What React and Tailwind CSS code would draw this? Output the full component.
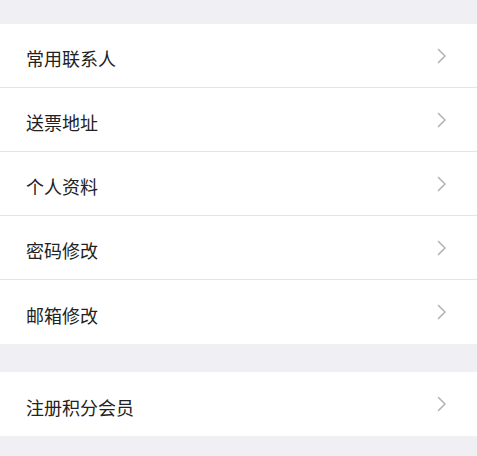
import React from 'react';

const items = ['常用联系人', '送票地址', '个人资料', '密码修改', '邮箱修改'];

function Chevron() {
  return (
    <svg width="10" height="16" viewBox="0 0 10 16" fill="none" className="shrink-0">
      <path d="M1.5 1.5L8 8l-6.5 6.5" stroke="#b4b4b8" strokeWidth="1.6" strokeLinecap="round" strokeLinejoin="round" />
    </svg>
  );
}

function Row({ label, last }) {
  return (
    <div className="flex h-[64px] items-center justify-between bg-white pl-[26px] pr-[30px] border-b border-[#e4e4e8] last:border-b-0">
      <span className="pt-[6px] text-[18px] text-[#222]">{label}</span>
      <Chevron />
    </div>
  );
}

export default function App() {
  return (
    <div
      className="h-[456px] w-[477px] overflow-hidden bg-[#efeff4]"
      style={{ fontFamily: '"Noto Sans CJK SC", "Noto Sans", sans-serif' }}
    >
      <div className="h-[24px]" />
      <div className="flex flex-col">
        {items.map((t) => (
          <Row key={t} label={t} />
        ))}
      </div>
      <div className="h-[28px]" />
      <div className="flex flex-col">
        <Row label="注册积分会员" />
      </div>
    </div>
  );
}
